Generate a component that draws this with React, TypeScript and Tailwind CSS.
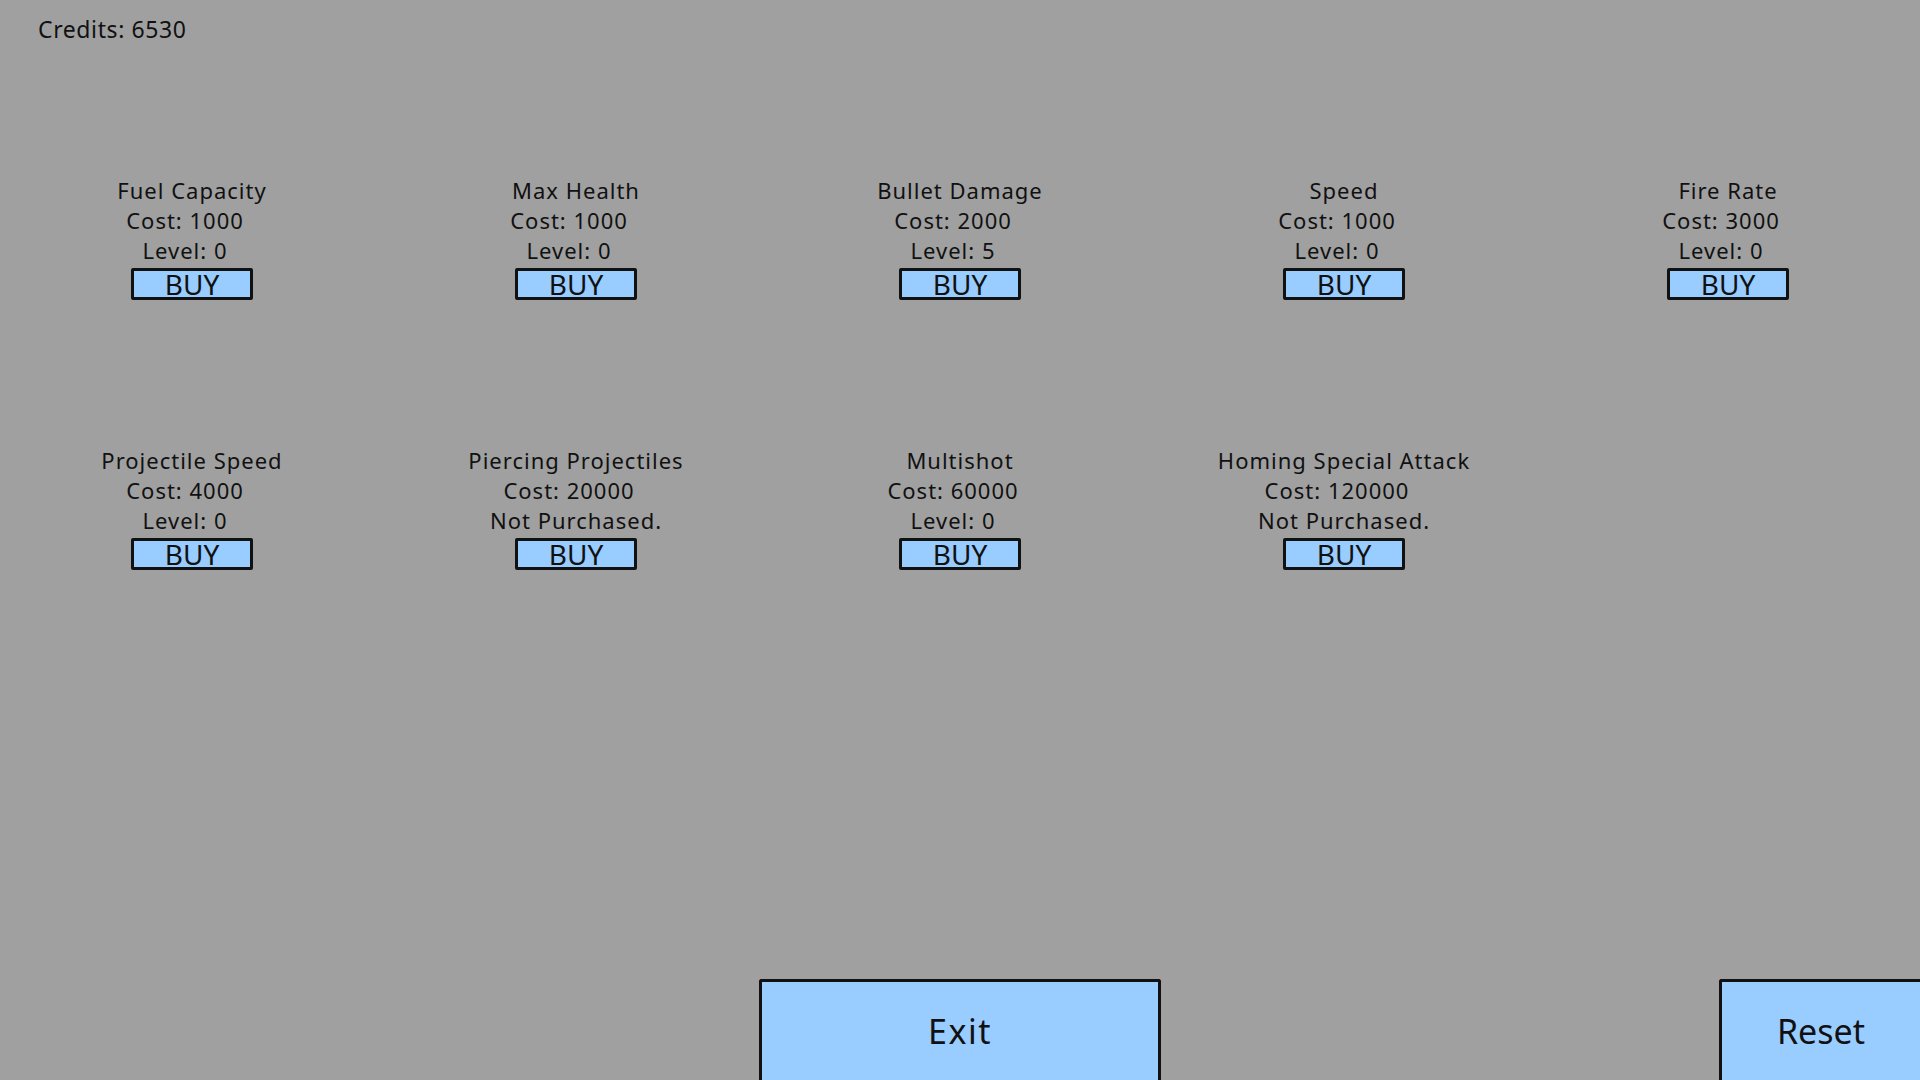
import React from "react";

type Item = { name: string; cost: string; status: string; purchased?: boolean };

const row1: Item[] = [
  { name: "Fuel Capacity", cost: "Cost: 1000", status: "Level: 0" },
  { name: "Max Health", cost: "Cost: 1000", status: "Level: 0" },
  { name: "Bullet Damage", cost: "Cost: 2000", status: "Level: 5" },
  { name: "Speed", cost: "Cost: 1000", status: "Level: 0" },
  { name: "Fire Rate", cost: "Cost: 3000", status: "Level: 0" },
];

const row2: Item[] = [
  { name: "Projectile Speed", cost: "Cost: 4000", status: "Level: 0" },
  { name: "Piercing Projectiles", cost: "Cost: 20000", status: "Not Purchased.", purchased: true },
  { name: "Multishot", cost: "Cost: 60000", status: "Level: 0" },
  { name: "Homing Special Attack", cost: "Cost: 120000", status: "Not Purchased.", purchased: true },
];

function Upgrade({ item }: { item: Item }) {
  return (
    <div className="flex flex-col items-center">
      <div className="text-[22px] leading-[30px] tracking-[1px] text-[#111]">{item.name}</div>
      <div className="text-[22px] leading-[30px] tracking-[1px] text-[#111] pr-[14px]">{item.cost}</div>
      <div className={`text-[22px] leading-[30px] tracking-[1px] text-[#111] ${item.purchased ? "" : "pr-[14px]"}`}>
        {item.status}
      </div>
      <button className="mt-[3px] w-[122px] h-[32px] bg-[#99ccff] border-[3px] border-[#111] rounded-[2px] text-[28px] leading-none text-[#111] flex items-center justify-center">
        BUY
      </button>
    </div>
  );
}

export default function App() {
  return (
    <div
      className="w-[1920px] h-[1080px] bg-[#a0a0a0] flex flex-col overflow-hidden"
      style={{ fontFamily: '"Noto Sans", sans-serif' }}
    >
      <div className="pl-[38px] pt-[12px] text-[23px] leading-[34px] tracking-[0.6px] text-[#111]">Credits: 6530</div>
      <div className="mt-[129px] grid grid-cols-5">
        {row1.map((it) => (
          <Upgrade key={it.name} item={it} />
        ))}
      </div>
      <div className="mt-[145px] grid grid-cols-5">
        {row2.map((it) => (
          <Upgrade key={it.name} item={it} />
        ))}
      </div>
      <div className="flex-1" />
      <div className="relative h-[101px] flex justify-center">
        <button className="w-[402px] h-[101px] bg-[#99ccff] border-[3px] border-b-0 border-[#111] rounded-t-[3px] text-[34px] tracking-[1.5px] text-[#111] flex items-center justify-center">
          Exit
        </button>
        <button className="absolute right-0 top-0 w-[201px] h-[101px] bg-[#99ccff] border-[3px] border-r-0 border-b-0 border-[#111] rounded-tl-[3px] text-[34px] text-[#111] flex items-center justify-center">
          Reset
        </button>
      </div>
    </div>
  );
}
